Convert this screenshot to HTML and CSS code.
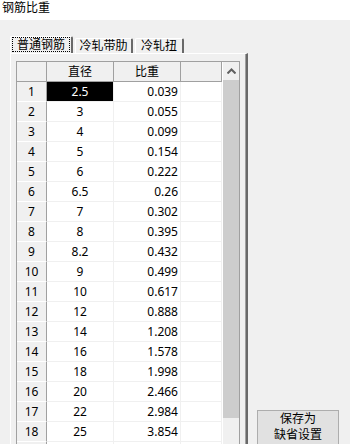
FILE: index.html
```html
<!DOCTYPE html>
<html lang="zh-CN">
<head>
  <meta charset="UTF-8" />
  <title>钢筋比重</title>
  <link rel="stylesheet" href="styles.css">
</head>
<body>
  <div class="titlebar">钢筋比重</div>
  <div class="content">
    <div class="tabctl">
      <div class="tabs">
        <div class="tab active"><span class="focus">普通钢筋</span></div>
        <div class="tab">冷轧带肋</div>
        <div class="tab">冷轧扭</div>
      </div>
      <div class="panel">
        <div class="grid">
          <div class="rows" id="rows">
            <div class="row head">
              <div class="cell rh"></div>
              <div class="cell c1">直径</div>
              <div class="cell c2">比重</div>
              <div class="cell c3"></div>
            </div>
          </div>
          <div class="vscroll">
            <div class="arrow">
              <svg width="9" height="6" viewBox="0 0 9 6"><path d="M0.5 5.5 L4.5 1.5 L8.5 5.5" fill="none" stroke="#606060" stroke-width="2"/></svg>
            </div>
            <div class="thumb"></div>
          </div>
        </div>
      </div>
    </div>
    <div class="side">
      <button class="save">保存为<br>缺省设置</button>
    </div>
  </div>

  <script>
    const data = [
      ['2.5', '0.039'], ['3', '0.055'], ['4', '0.099'], ['5', '0.154'],
      ['6', '0.222'], ['6.5', '0.26'], ['7', '0.302'], ['8', '0.395'],
      ['8.2', '0.432'], ['9', '0.499'], ['10', '0.617'], ['12', '0.888'],
      ['14', '1.208'], ['16', '1.578'], ['18', '1.998'], ['20', '2.466'],
      ['22', '2.984'], ['25', '3.854']
    ];

    const rows = document.getElementById('rows');
    data.forEach(function (d, i) {
      const row = document.createElement('div');
      row.className = 'row';
      row.innerHTML =
        '<div class="cell rh">' + (i + 1) + '</div>' +
        '<div class="cell c1' + (i === 0 ? ' sel' : '') + '">' + d[0] + '</div>' +
        '<div class="cell c2">' + d[1] + '</div>' +
        '<div class="cell c3"></div>';
      rows.appendChild(row);
    });

    // next row only peeks in at the bottom edge
    const more = document.createElement('div');
    more.className = 'row';
    more.innerHTML = '<div class="cell rh"></div><div class="cell c1"></div>' +
      '<div class="cell c2"></div><div class="cell c3"></div>';
    rows.appendChild(more);
  </script>
</body>
</html>
```

FILE: styles.css
```css
html, body {
  margin: 0;
  padding: 0;
}
body {
  width: 350px;
  height: 444px;
  overflow: hidden;
  background: #f0f0f0;
  font-family: "Noto Sans", "Noto Sans CJK SC", sans-serif;
  font-size: 12px;
  color: #000;
}
.titlebar {
  height: 20px;
  background: #fff;
  padding-left: 2px;
  line-height: 16px;
}
.content {
  display: flex;
  align-items: flex-start;
  padding: 16px 0 0 10px;
}
.tabctl {
  width: 238px;
}
.tabs {
  display: flex;
  align-items: flex-end;
  height: 17px;
}
.tab {
  box-sizing: border-box;
  height: 15px;
  border-top: 1px solid #fff;
  border-left: 1px solid #fff;
  border-right: 2px solid #696969;
  border-radius: 2px 2px 0 0;
  line-height: 14px;
  text-align: center;
  margin-left: 2px;
  width: 58px;
}
.tab:last-child {
  width: 49px;
}
.tab.active {
  height: 17px;
  width: 63px;
  margin-left: 0;
  padding-top: 1px;
}
.focus {
  display: inline-block;
  line-height: 13px;
  padding: 0 4px;
  outline: 1px dotted #000;
}
.panel {
  box-sizing: border-box;
  height: 400px;
  border-top: 1px solid #fff;
  border-left: 1px solid #fff;
  border-right: 2px solid #696969;
  box-shadow: inset -1px 0 0 #a0a0a0;
  padding: 7px 0 0 5px;
}
.grid {
  display: flex;
  width: 222px;
  border: 1px solid #a0a0a0;
  border-bottom: none;
  background: #fff;
}
.rows {
  width: 205px;
}
.row {
  display: flex;
  height: 20px;
}
.cell {
  box-sizing: border-box;
  height: 20px;
  line-height: 19px;
  border-right: 1px solid #f0f0f0;
  border-bottom: 1px solid #f0f0f0;
  white-space: nowrap;
  overflow: hidden;
}
.rh {
  width: 30px;
  background: #f0f0f0;
  border-right-color: #a0a0a0;
  border-bottom-color: #fff;
  text-align: center;
}
.c1 {
  width: 67px;
  text-align: center;
}
.c2 {
  width: 67px;
  text-align: right;
  padding-right: 2px;
}
.c3 {
  width: 41px;
}
.head .cell {
  background: #f0f0f0;
  border-right-color: #a0a0a0;
  border-bottom-color: #a0a0a0;
  text-align: center;
  padding-right: 0;
}
.sel {
  background: #000;
  color: #fff;
}
.vscroll {
  width: 16px;
  background: #f0f0f0;
  border-left: 1px solid #fff;
}
.arrow {
  height: 18px;
  display: flex;
  align-items: center;
  justify-content: center;
}
.thumb {
  height: 338px;
  background: #cdcdcd;
}
.side {
  padding: 374px 0 0 9px;
}
.save {
  box-sizing: border-box;
  width: 82px;
  margin: 0;
  padding: 0 0 8px;
  background: #e1e1e1;
  border: 1px solid #adadad;
  font-family: "Noto Sans", "Noto Sans CJK SC", sans-serif;
  font-size: 12px;
  line-height: 16px;
  color: #000;
  display: block;
}
```
